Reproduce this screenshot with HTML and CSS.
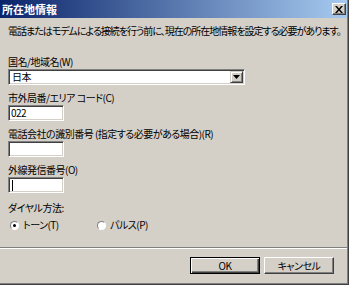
FILE: index.html
```html
<!DOCTYPE html>
<html lang="ja">
<head>
    <meta charset="UTF-8">
    <title>所在地情報</title>
    <link rel="stylesheet" href="styles.css">
</head>
<body>

    <div class="window">
        <div class="titlebar">
            <span class="title">所在地情報</span>
            <span class="close-btn">
                <svg width="8" height="7" viewBox="0 0 8 7">
                    <path d="M0 0h2l2 2.5 2-2.5h2l-3 3.5 3 3.5h-2l-2-2.5-2 2.5h-2l3-3.5z" fill="#000"/>
                </svg>
            </span>
        </div>

        <div class="content">
            <p class="desc">電話またはモデムによる接続を行う前に、現在の所在地情報を設定する必要があります。</p>

            <div class="field first">
                <div class="label">国名/地域名(W)</div>
                <div class="combo">
                    <span class="combo-text">日本</span>
                    <span class="combo-btn">
                        <svg width="7" height="4" viewBox="0 0 7 4"><path d="M0 0h7l-3.5 4z" fill="#000"/></svg>
                    </span>
                </div>
            </div>

            <div class="field">
                <div class="label">市外局番/エリア コード(C)</div>
                <div class="textbox">022</div>
            </div>

            <div class="field">
                <div class="label">電話会社の識別番号 (指定する必要がある場合)(R)</div>
                <div class="textbox"></div>
            </div>

            <div class="field">
                <div class="label">外線発信番号(O)</div>
                <div class="textbox"><span class="caret"></span></div>
            </div>

            <div class="field dial">
                <div class="label">ダイヤル方法:</div>
                <div class="radios">
                    <span class="radio checked"><span class="dot"></span>トーン(T)</span>
                    <span class="radio"><span class="dot"></span>パルス(P)</span>
                </div>
            </div>
        </div>

        <div class="separator"></div>

        <div class="buttons">
            <button class="btn default">OK</button>
            <button class="btn">キャンセル</button>
        </div>
    </div>

</body>
</html>
```

FILE: styles.css
```css
body {
    margin: 0;
    padding: 0;
    background: #d4d0c8;
    font-family: "Noto Sans CJK JP", "Noto Sans", sans-serif;
    font-size: 10px;
    font-feature-settings: "palt";
    letter-spacing: -0.5px;
    color: #000;
}

.window {
    width: 349px;
    height: 285px;
    box-sizing: border-box;
    padding: 0 2px 3px 0;
    background: #d4d0c8;
    box-shadow: inset -1px -1px 0 #404040, inset -2px -2px 0 #808080, inset -3px -3px 0 #d4d0c8;
    display: flex;
    flex-direction: column;
    overflow: hidden;
}

.titlebar {
    height: 18px;
    background: linear-gradient(to right, #0a246a, #a6caf0);
    display: flex;
    align-items: center;
    justify-content: space-between;
    padding: 0 1px 0 2px;
}

.title {
    color: #fff;
    font-weight: bold;
    font-size: 11px;
    line-height: 12px;
    letter-spacing: 0;
}

.close-btn {
    width: 14px;
    height: 12px;
    box-sizing: border-box;
    background: #d4d0c8;
    border-top: 1px solid #fff;
    border-left: 1px solid #fff;
    border-right: 1px solid #404040;
    border-bottom: 1px solid #404040;
    box-shadow: inset -1px -1px 0 #808080;
    display: flex;
    align-items: center;
    justify-content: center;
}

.content {
    padding: 7px 0 0 8px;
}

.desc {
    margin: 0;
    line-height: 12px;
    white-space: nowrap;
    letter-spacing: -1px;
}

.label {
    line-height: 12px;
    height: 12px;
    white-space: nowrap;
}

.field {
    margin-top: 7px;
}

.field.first {
    margin-top: 19px;
}

.field.dial {
    margin-top: 9px;
}

.field .label {
    margin-bottom: 1px;
}

.combo {
    width: 237px;
    height: 16px;
    box-sizing: border-box;
    background: #fff;
    border-top: 1px solid #808080;
    border-left: 1px solid #808080;
    border-right: 1px solid #fff;
    border-bottom: 1px solid #fff;
    box-shadow: inset 1px 1px 0 #404040, inset -1px -1px 0 #d4d0c8;
    display: flex;
    align-items: center;
    justify-content: space-between;
    padding: 0 1px 0 3px;
}

.combo-text {
    line-height: 12px;
}

.combo-btn {
    width: 13px;
    height: 12px;
    box-sizing: border-box;
    background: #d4d0c8;
    border-top: 1px solid #d4d0c8;
    border-left: 1px solid #d4d0c8;
    border-right: 1px solid #404040;
    border-bottom: 1px solid #404040;
    box-shadow: inset 1px 1px 0 #fff, inset -1px -1px 0 #808080;
    display: flex;
    align-items: center;
    justify-content: center;
}

.textbox {
    width: 56px;
    height: 16px;
    box-sizing: border-box;
    background: #fff;
    border-top: 1px solid #808080;
    border-left: 1px solid #808080;
    border-right: 1px solid #fff;
    border-bottom: 1px solid #fff;
    box-shadow: inset 1px 1px 0 #404040, inset -1px -1px 0 #d4d0c8;
    padding: 0 2px;
    line-height: 14px;
    display: flex;
    align-items: center;
}

.caret {
    width: 1px;
    height: 11px;
    background: #000;
    margin-left: 1px;
}

.radios {
    display: flex;
    margin-top: 5px;
    padding-left: 2px;
}

.radio {
    display: flex;
    align-items: center;
    line-height: 12px;
    width: 87px;
}

.dot {
    width: 9px;
    height: 9px;
    box-sizing: border-box;
    border-radius: 50%;
    background: #fff;
    border: 1px solid;
    border-color: #808080 #fff #fff #808080;
    margin-right: 4px;
    position: relative;
}

.radio.checked .dot::after {
    content: "";
    position: absolute;
    left: 2px;
    top: 2px;
    width: 3px;
    height: 3px;
    border-radius: 50%;
    background: #000;
}

.separator {
    margin-top: auto;
    height: 0;
    border-top: 1px solid #808080;
    border-bottom: 1px solid #fff;
}

.buttons {
    display: flex;
    justify-content: flex-end;
    gap: 4px;
    padding: 8px 13px 8px 0;
}

.btn {
    width: 70px;
    height: 17px;
    box-sizing: border-box;
    padding: 0;
    font-family: inherit;
    font-size: 10px;
    font-feature-settings: "palt";
    letter-spacing: -0.5px;
    background: #d4d0c8;
    border-top: 1px solid #fff;
    border-left: 1px solid #fff;
    border-right: 1px solid #404040;
    border-bottom: 1px solid #404040;
    box-shadow: inset -1px -1px 0 #808080;
    line-height: 14px;
}

.btn.default {
    border: 1px solid #000;
    box-shadow: inset 1px 1px 0 #fff, inset -1px -1px 0 #404040, inset -2px -2px 0 #808080;
}
```
